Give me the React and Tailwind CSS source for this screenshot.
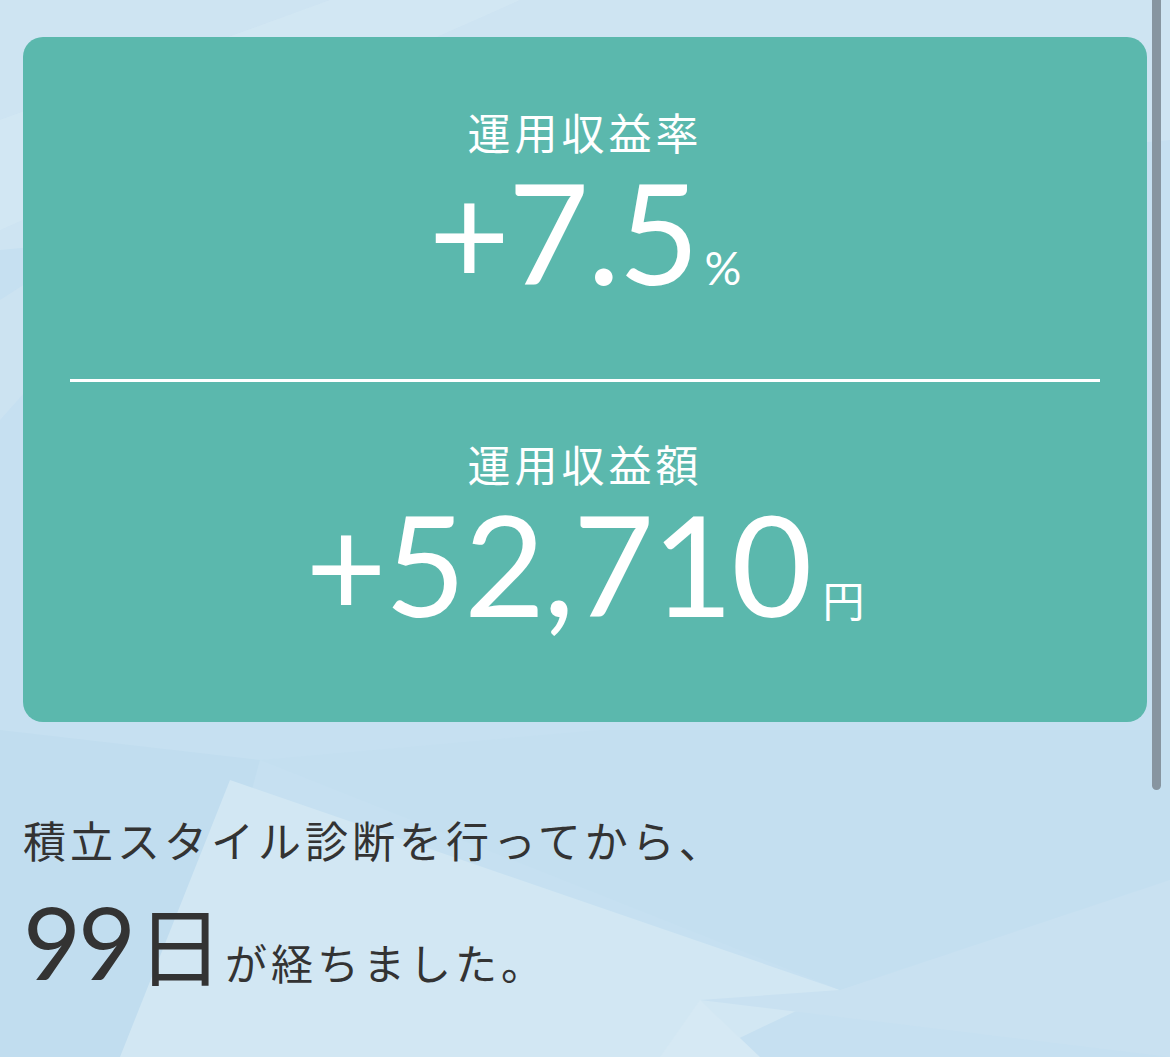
const jp = "font-['Noto_Sans_CJK_JP','Noto_Sans',sans-serif]";
const num = "font-['Lato','Noto_Sans_CJK_JP',sans-serif]";

function Backdrop() {
  return (
    <svg
      className="absolute inset-0 h-full w-full"
      viewBox="0 0 1170 1057"
      preserveAspectRatio="none"
    >
      <rect width="1170" height="1057" fill="#c6e0f1" />
      <polygon points="0,0 1170,0 1170,140 0,250" fill="#cee4f2" />
      <polygon points="0,120 330,0 520,0 0,230" fill="#d4e8f3" opacity="0.7" />
      <polygon points="0,300 250,140 0,420" fill="#d0e5f2" opacity="0.6" />
      <polygon points="0,730 260,760 180,1057 0,1057" fill="#c1ddef" />
      <polygon points="230,780 840,990 700,1057 120,1057" fill="#d2e7f3" />
      <polygon points="260,760 840,990 1170,900 1170,730 600,730" fill="#c4dff0" />
      <polygon points="700,1000 1170,1057 1170,880 840,990" fill="#c9e1f1" />
      <polygon points="700,1000 660,1057 760,1057" fill="#d6e9f4" />
    </svg>
  );
}

function Figure({ value, unit, unitClass }) {
  return (
    <div className="flex items-baseline justify-center leading-none text-white">
      <span className={`${num} text-[140px] leading-none tracking-[-2px]`}>{value}</span>
      <span className={unitClass}>{unit}</span>
    </div>
  );
}

export default function App() {
  return (
    <div className="relative h-[1057px] w-[1170px] overflow-hidden">
      <Backdrop />

      {/* scrollbar */}
      <div className="absolute right-[9px] top-0 h-[790px] w-[9px] rounded-b-full bg-[#8795a0]" />

      <div className="relative px-[23px] pt-[37px]">
        {/* Result card */}
        <div className="flex h-[685px] w-[1124px] flex-col rounded-[20px] bg-[#5bb8ad] pt-[72px]">
          <div className={`${jp} text-center text-[43px] leading-[44px] tracking-[4px] text-white`}>
            運用収益率
          </div>
          <div className="mt-[8px]">
            <Figure
              value="+7.5"
              unit="%"
              unitClass={`${num} ml-[7px] text-[46px] leading-none`}
            />
          </div>
          <div className="mx-[47px] mt-[78px] h-[3px] bg-white" />
          <div className={`${jp} mt-[59px] text-center text-[43px] leading-[44px] tracking-[4px] text-white`}>
            運用収益額
          </div>
          <div className="mt-[8px]">
            <Figure
              value="+52,710"
              unit="円"
              unitClass={`${jp} ml-[12px] text-[42px] leading-none`}
            />
          </div>
        </div>

        {/* Elapsed days */}
        <div className={`${jp} mt-[94px] text-[43px] leading-[46px] tracking-[4px] text-[#333333]`}>
          積立スタイル診断を行ってから、
        </div>
        <div className="mt-[29px] flex items-baseline leading-none text-[#333333]">
          <span className={`${num} text-[100px] leading-none tracking-[-3px]`}>99</span>
          <span className={`${jp} ml-[4px] text-[86px] leading-none`}>日</span>
          <span className={`${jp} ml-[2px] text-[42px] leading-none tracking-[4px]`}>が経ちました。</span>
        </div>
      </div>
    </div>
  );
}
